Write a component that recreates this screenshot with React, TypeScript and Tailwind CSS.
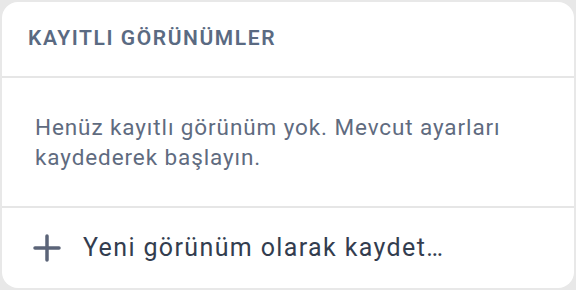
export default function App() {
  return (
    <div className="w-[576px] h-[290px] bg-[#e8e8e8] p-[2px] font-['Roboto',sans-serif]">
      <div className="h-full bg-white rounded-[16px] flex flex-col overflow-hidden">
        {/* Header */}
        <div className="h-[76px] flex items-center px-[26px] border-b-2 border-[#e6e6e6]">
          <h2 className="text-[21px] font-semibold tracking-[0.075em] uppercase text-[#5a6a82]">
            Kayıtlı Görünümler
          </h2>
        </div>

        {/* Empty state */}
        <div className="h-[130px] flex items-center px-[33px] border-b-2 border-[#e6e6e6]">
          <p className="text-[22.5px] leading-[30px] tracking-[0.04em] text-[#5f6b80]">
            Henüz kayıtlı görünüm yok. Mevcut ayarları kaydederek başlayın.
          </p>
        </div>

        {/* Action */}
        <button className="flex-1 flex items-center gap-[22px] px-[31px] text-left">
          <svg width="28" height="28" viewBox="0 0 28 28" fill="none" stroke="#5b6478" strokeWidth="3.5" strokeLinecap="round">
            <path d="M14 2v24M2 14h24" />
          </svg>
          <span className="text-[25px] tracking-[0.055em] text-[#333d4f]">Yeni görünüm olarak kaydet…</span>
        </button>
      </div>
    </div>
  );
}
